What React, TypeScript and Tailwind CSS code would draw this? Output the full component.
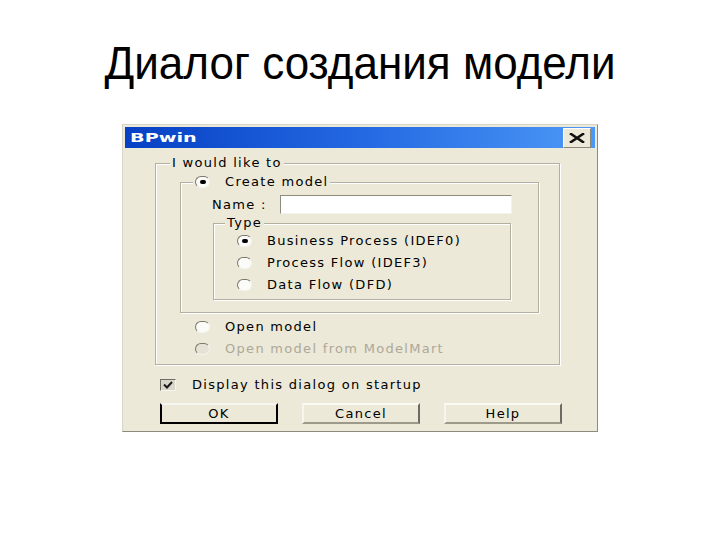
import type { ReactNode } from 'react'

const FACE = "bg-[#ece9d8]"

function Radio({ checked = false, disabled = false }: { checked?: boolean; disabled?: boolean }) {
  return (
    <span
      className={`relative flex h-[12px] w-[15px] shrink-0 items-center justify-center rounded-full border border-t-[#7a786e] border-l-[#7a786e] border-r-[#f4f3ee] border-b-[#f4f3ee] ${
        disabled ? 'bg-[#e6e3d6]' : 'bg-[#fbfbf8]'
      }`}
    >
      {checked && <span className="h-[4px] w-[6px] rounded-full bg-black" />}
    </span>
  )
}

function Option({ label, checked, disabled }: { label: string; checked?: boolean; disabled?: boolean }) {
  return (
    <div className="flex h-[22px] items-center gap-[15px]">
      <Radio checked={checked} disabled={disabled} />
      <span className={disabled ? 'text-[#aca899]' : 'text-black'}>{label}</span>
    </div>
  )
}

// etched group box, legend sits on the top line
function Group({ legend, className, children }: { legend: ReactNode; className: string; children: ReactNode }) {
  return (
    <div
      className={`border border-[#b3b0a2] shadow-[inset_1px_1px_0_#ffffff,1px_1px_0_#ffffff] ${className}`}
    >
      <div className={`-mt-[8px] flex h-[14px] w-fit items-center px-[2px] ${FACE}`}>{legend}</div>
      {children}
    </div>
  )
}

function Button({ label, primary = false }: { label: string; primary?: boolean }) {
  return (
    <button
      type="button"
      className={`flex h-[21px] w-[118px] items-center justify-center ${FACE} ${
        primary
          ? 'border-2 border-t-[#f6f5f0] border-l-black border-r-black border-b-black'
          : 'border-2 border-t-[#fbfaf6] border-l-[#f6f5ef] border-r-[#6e6c62] border-b-[#9d9a8c]'
      }`}
    >
      {label}
    </button>
  )
}

function CloseGlyph() {
  return (
    <svg width="16" height="10" viewBox="0 0 16 10">
      <path d="M2 1 L14 9 M14 1 L2 9" stroke="#111" strokeWidth="2.6" strokeLinecap="square" />
    </svg>
  )
}

export default function App() {
  return (
    <div className="h-[540px] w-[720px] overflow-hidden bg-white font-['Liberation_Sans',Arial,sans-serif]">
      <h1 className="pt-[37px] text-center text-[44px] leading-[52px] text-black">
        <span className="inline-block scale-y-[1.07]">Диалог создания модели</span>
      </h1>

      <div
        className={`ml-[122px] mt-[35px] w-[476px] border border-t-[#d8d5c8] border-l-[#d8d5c8] border-r-[#8c8a7f] border-b-[#8c8a7f] p-[2px] ${FACE}`}
      >
        {/* title bar */}
        <div className="flex h-[21px] items-center justify-between bg-linear-to-r from-[#0740c4] via-[#2468e2] to-[#4c98f6] pl-[5px] pr-[4px]">
          <span className="inline-block origin-left scale-x-[1.6] font-['DejaVu_Sans',sans-serif] text-[12px] font-bold text-white">
            BPwin
          </span>
          <span className="flex h-[20px] w-[28px] items-center justify-center border border-t-[#ffffff] border-l-[#ffffff] border-r-[#8a887c] border-b-[#8a887c] bg-[#ece9d8]">
            <CloseGlyph />
          </span>
        </div>

        <div className="pl-[30px] pt-[15px] pb-[5px] font-['DejaVu_Sans',sans-serif] text-[13px] leading-[14px] tracking-[1.3px] text-black">
          <Group legend={<span>I would like to</span>} className="w-[405px] pb-[4px] [&>div:first-child]:ml-[14px]">
            <Group
              legend={
                <span className="flex items-center gap-[15px]">
                  <Radio checked />
                  <span>Create model</span>
                </span>
              }
              className="ml-[24px] mt-[12px] w-[359px] pb-[12px] [&>div:first-child]:ml-[12px]"
            >
              <div className="mt-[6px] flex items-center pl-[31px]">
                <span className="w-[68px]">Name :</span>
                <span className="h-[19px] w-[232px] border border-t-[#8d8b80] border-l-[#8d8b80] border-r-[#f3f2ec] border-b-[#f3f2ec] bg-white" />
              </div>
              <Group legend={<span>Type</span>} className="ml-[32px] mt-[9px] w-[298px] pb-[3px] [&>div:first-child]:ml-[11px]">
                <div className="pl-[23px]">
                  <Option label="Business Process (IDEF0)" checked />
                  <Option label="Process Flow (IDEF3)" />
                  <Option label="Data Flow (DFD)" />
                </div>
              </Group>
            </Group>
            <div className="mt-[3px] pl-[39px]">
              <Option label="Open model" />
              <Option label="Open model from ModelMart" disabled />
            </div>
          </Group>

          <div className="ml-[5px] mt-[10px] flex h-[20px] items-center gap-[16px]">
            <span className="flex h-[12px] w-[16px] items-center justify-center border border-t-[#6f6d63] border-l-[#6f6d63] border-r-[#f4f3ee] border-b-[#f4f3ee] bg-[#d9d6ca]">
              <svg width="10" height="8" viewBox="0 0 10 8">
                <path d="M1 3.5 L4 6.5 L9 1" stroke="#1a1a1a" strokeWidth="2" fill="none" />
              </svg>
            </span>
            <span>Display this dialog on startup</span>
          </div>

          <div className="ml-[5px] mt-[8px] flex gap-[24px]">
            <Button label="OK" primary />
            <Button label="Cancel" />
            <Button label="Help" />
          </div>
        </div>
      </div>
    </div>
  )
}
